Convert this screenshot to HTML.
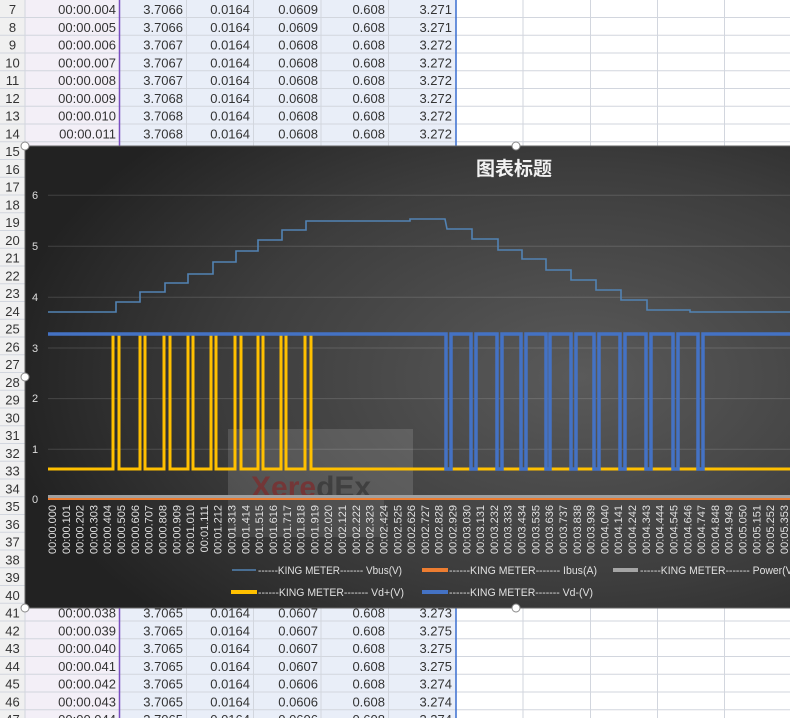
<!DOCTYPE html>
<html><head><meta charset="utf-8"><style>
html,body{margin:0;padding:0;background:#fff;}
svg{display:block;font-family:"Liberation Sans","Noto Sans CJK SC",sans-serif;}
</style></head><body>
<svg width="790" height="718" viewBox="0 0 790 718" xmlns="http://www.w3.org/2000/svg">
<defs>
<radialGradient id="bg" cx="0.72" cy="0.5" r="0.75">
<stop offset="0" stop-color="#5a5a5a"/><stop offset="0.6" stop-color="#3d3d3d"/><stop offset="1" stop-color="#222"/>
</radialGradient>
</defs>
<rect x="0" y="0" width="25" height="718" fill="#f0f0f0"/>
<rect x="25" y="0" width="94" height="718" fill="#f3eff7"/>
<rect x="120" y="0" width="336" height="718" fill="#e9eef8"/>
<g stroke="#d2d6de" stroke-width="1">
<line x1="0" y1="17.5" x2="790" y2="17.5"/><line x1="0" y1="35.3" x2="790" y2="35.3"/><line x1="0" y1="53" x2="790" y2="53"/><line x1="0" y1="70.8" x2="790" y2="70.8"/><line x1="0" y1="88.5" x2="790" y2="88.5"/><line x1="0" y1="106.3" x2="790" y2="106.3"/><line x1="0" y1="124" x2="790" y2="124"/><line x1="0" y1="141.8" x2="790" y2="141.8"/>
<line x1="0" y1="159.5" x2="25" y2="159.5"/><line x1="0" y1="177.3" x2="25" y2="177.3"/><line x1="0" y1="195" x2="25" y2="195"/><line x1="0" y1="212.8" x2="25" y2="212.8"/><line x1="0" y1="230.5" x2="25" y2="230.5"/><line x1="0" y1="248.3" x2="25" y2="248.3"/><line x1="0" y1="266" x2="25" y2="266"/><line x1="0" y1="283.8" x2="25" y2="283.8"/><line x1="0" y1="301.5" x2="25" y2="301.5"/><line x1="0" y1="319.3" x2="25" y2="319.3"/><line x1="0" y1="337" x2="25" y2="337"/><line x1="0" y1="354.8" x2="25" y2="354.8"/><line x1="0" y1="372.5" x2="25" y2="372.5"/><line x1="0" y1="390.3" x2="25" y2="390.3"/><line x1="0" y1="408" x2="25" y2="408"/><line x1="0" y1="425.8" x2="25" y2="425.8"/><line x1="0" y1="443.5" x2="25" y2="443.5"/><line x1="0" y1="461.3" x2="25" y2="461.3"/><line x1="0" y1="479" x2="25" y2="479"/><line x1="0" y1="496.8" x2="25" y2="496.8"/><line x1="0" y1="514.5" x2="25" y2="514.5"/><line x1="0" y1="532.3" x2="25" y2="532.3"/><line x1="0" y1="550" x2="25" y2="550"/><line x1="0" y1="567.8" x2="25" y2="567.8"/><line x1="0" y1="585.5" x2="25" y2="585.5"/><line x1="0" y1="603.3" x2="25" y2="603.3"/>
<line x1="0" y1="621" x2="790" y2="621"/><line x1="0" y1="638.8" x2="790" y2="638.8"/><line x1="0" y1="656.5" x2="790" y2="656.5"/><line x1="0" y1="674.3" x2="790" y2="674.3"/><line x1="0" y1="692" x2="790" y2="692"/><line x1="0" y1="709.8" x2="790" y2="709.8"/>
<line x1="25" y1="0" x2="25" y2="718"/><line x1="186.5" y1="0" x2="186.5" y2="718"/><line x1="253.5" y1="0" x2="253.5" y2="718"/><line x1="321" y1="0" x2="321" y2="718"/><line x1="388.5" y1="0" x2="388.5" y2="718"/>
<line x1="523" y1="0" x2="523" y2="718"/><line x1="590.5" y1="0" x2="590.5" y2="718"/><line x1="657.5" y1="0" x2="657.5" y2="718"/><line x1="724.5" y1="0" x2="724.5" y2="718"/>
</g>
<line x1="119.5" y1="0" x2="119.5" y2="718" stroke="#7a4fc0" stroke-width="1.5"/>
<line x1="456" y1="0" x2="456" y2="718" stroke="#3a6fd0" stroke-width="1.5"/>
<g font-size="13" fill="#333" text-anchor="middle">
<text x="12.5" y="14">7</text><text x="12.5" y="31.8">8</text><text x="12.5" y="49.5">9</text><text x="12.5" y="67.3">10</text><text x="12.5" y="85">11</text><text x="12.5" y="102.8">12</text><text x="12.5" y="120.5">13</text><text x="12.5" y="138.3">14</text><text x="12.5" y="156">15</text><text x="12.5" y="173.8">16</text><text x="12.5" y="191.5">17</text><text x="12.5" y="209.3">18</text><text x="12.5" y="227">19</text><text x="12.5" y="244.8">20</text><text x="12.5" y="262.5">21</text><text x="12.5" y="280.3">22</text><text x="12.5" y="298">23</text><text x="12.5" y="315.8">24</text><text x="12.5" y="333.5">25</text><text x="12.5" y="351.3">26</text><text x="12.5" y="369">27</text><text x="12.5" y="386.8">28</text><text x="12.5" y="404.5">29</text><text x="12.5" y="422.3">30</text><text x="12.5" y="440">31</text><text x="12.5" y="457.8">32</text><text x="12.5" y="475.5">33</text><text x="12.5" y="493.3">34</text><text x="12.5" y="511">35</text><text x="12.5" y="528.8">36</text><text x="12.5" y="546.5">37</text><text x="12.5" y="564.3">38</text><text x="12.5" y="582">39</text><text x="12.5" y="599.8">40</text><text x="12.5" y="617.5">41</text><text x="12.5" y="635.3">42</text><text x="12.5" y="653">43</text><text x="12.5" y="670.8">44</text><text x="12.5" y="688.5">45</text><text x="12.5" y="706.3">46</text><text x="12.5" y="724">47</text>
</g>
<g font-size="13" fill="#333" text-anchor="end">
<text x="116" y="14">00:00.004</text><text x="183" y="14">3.7066</text><text x="250" y="14">0.0164</text><text x="318" y="14">0.0609</text><text x="385" y="14">0.608</text><text x="452" y="14">3.271</text>
<text x="116" y="31.8">00:00.005</text><text x="183" y="31.8">3.7066</text><text x="250" y="31.8">0.0164</text><text x="318" y="31.8">0.0609</text><text x="385" y="31.8">0.608</text><text x="452" y="31.8">3.271</text>
<text x="116" y="49.5">00:00.006</text><text x="183" y="49.5">3.7067</text><text x="250" y="49.5">0.0164</text><text x="318" y="49.5">0.0608</text><text x="385" y="49.5">0.608</text><text x="452" y="49.5">3.272</text>
<text x="116" y="67.3">00:00.007</text><text x="183" y="67.3">3.7067</text><text x="250" y="67.3">0.0164</text><text x="318" y="67.3">0.0608</text><text x="385" y="67.3">0.608</text><text x="452" y="67.3">3.272</text>
<text x="116" y="85">00:00.008</text><text x="183" y="85">3.7067</text><text x="250" y="85">0.0164</text><text x="318" y="85">0.0608</text><text x="385" y="85">0.608</text><text x="452" y="85">3.272</text>
<text x="116" y="102.8">00:00.009</text><text x="183" y="102.8">3.7068</text><text x="250" y="102.8">0.0164</text><text x="318" y="102.8">0.0608</text><text x="385" y="102.8">0.608</text><text x="452" y="102.8">3.272</text>
<text x="116" y="120.5">00:00.010</text><text x="183" y="120.5">3.7068</text><text x="250" y="120.5">0.0164</text><text x="318" y="120.5">0.0608</text><text x="385" y="120.5">0.608</text><text x="452" y="120.5">3.272</text>
<text x="116" y="138.3">00:00.011</text><text x="183" y="138.3">3.7068</text><text x="250" y="138.3">0.0164</text><text x="318" y="138.3">0.0608</text><text x="385" y="138.3">0.608</text><text x="452" y="138.3">3.272</text>
<text x="116" y="617.5">00:00.038</text><text x="183" y="617.5">3.7065</text><text x="250" y="617.5">0.0164</text><text x="318" y="617.5">0.0607</text><text x="385" y="617.5">0.608</text><text x="452" y="617.5">3.273</text>
<text x="116" y="635.3">00:00.039</text><text x="183" y="635.3">3.7065</text><text x="250" y="635.3">0.0164</text><text x="318" y="635.3">0.0607</text><text x="385" y="635.3">0.608</text><text x="452" y="635.3">3.275</text>
<text x="116" y="653">00:00.040</text><text x="183" y="653">3.7065</text><text x="250" y="653">0.0164</text><text x="318" y="653">0.0607</text><text x="385" y="653">0.608</text><text x="452" y="653">3.275</text>
<text x="116" y="670.8">00:00.041</text><text x="183" y="670.8">3.7065</text><text x="250" y="670.8">0.0164</text><text x="318" y="670.8">0.0607</text><text x="385" y="670.8">0.608</text><text x="452" y="670.8">3.275</text>
<text x="116" y="688.5">00:00.042</text><text x="183" y="688.5">3.7065</text><text x="250" y="688.5">0.0164</text><text x="318" y="688.5">0.0606</text><text x="385" y="688.5">0.608</text><text x="452" y="688.5">3.274</text>
<text x="116" y="706.3">00:00.043</text><text x="183" y="706.3">3.7065</text><text x="250" y="706.3">0.0164</text><text x="318" y="706.3">0.0606</text><text x="385" y="706.3">0.608</text><text x="452" y="706.3">3.274</text>
<text x="116" y="724">00:00.044</text><text x="183" y="724">3.7065</text><text x="250" y="724">0.0164</text><text x="318" y="724">0.0606</text><text x="385" y="724">0.608</text><text x="452" y="724">3.274</text>
</g>

<rect x="25" y="146" width="770" height="462" fill="url(#bg)" stroke="#666" stroke-width="1"/>
<text x="514" y="175" font-size="19" font-weight="bold" fill="#f2f2f2" text-anchor="middle">图表标题</text>
<g stroke="#ffffff" stroke-opacity="0.14" stroke-width="1">
<line x1="48" y1="195.3" x2="790" y2="195.3"/><line x1="48" y1="246.3" x2="790" y2="246.3"/><line x1="48" y1="297.3" x2="790" y2="297.3"/><line x1="48" y1="348" x2="790" y2="348"/><line x1="48" y1="398.6" x2="790" y2="398.6"/><line x1="48" y1="449.3" x2="790" y2="449.3"/>
</g>
<g font-size="11" fill="#ddd" text-anchor="middle">
<text x="35" y="199">6</text><text x="35" y="250">5</text><text x="35" y="301">4</text><text x="35" y="352">3</text><text x="35" y="402">2</text><text x="35" y="453">1</text><text x="35" y="503">0</text>
</g>
<rect x="228" y="429" width="185" height="71" fill="#ffffff" fill-opacity="0.13"/>
<rect x="228" y="500" width="156" height="37" fill="#ffffff" fill-opacity="0.09"/>
<text x="251" y="497" font-size="30" font-weight="bold" fill="#7a2e30" fill-opacity="0.8">Xere<tspan fill="#3a3a3a">dEx</tspan></text>

<path d="M48,312 H116 V302 H140 V292 H165 V283 H188 V274 H213 V262 H236 V251 H258 V240 H282 V230 H306 V221 H410 V219 H445 L447,229 H472 V239 H498 V250 H522 V259 H546 V270 H571 V280 H596 V290 H621 V300 H647 V310 H690 V312 H790" fill="none" stroke="#5283b4" stroke-width="1.6"/>
<line x1="48" y1="496.5" x2="790" y2="496.5" stroke="#a0a0a0" stroke-width="3"/>
<line x1="48" y1="499" x2="790" y2="499" stroke="#ed7d31" stroke-width="2"/>
<path d="M48,469 H113 V334 H119 V469 H140 V334 H145 V469 H164 V334 H170 V469 H188 V334 H193 V469 H211 V334 H216 V469 H235 V334 H241 V469 H258 V334 H263 V469 H281 V334 H286 V469 H305 V334 H311 V469 H790" fill="none" stroke="#ffc000" stroke-width="3"/>
<path d="M48,334 H446 V469 H451 V334 H471 V469 H476 V334 H497 V469 H502 V334 H521 V469 H526 V334 H546 V469 H550 V334 H571 V469 H576 V334 H594 V469 H599 V334 H620 V469 H625 V334 H646 V469 H651 V334 H673 V469 H678 V334 H698 V469 H703 V334 H790" fill="none" stroke="#4472c4" stroke-width="3.5"/>

<g font-size="11" fill="#e0e0e0" text-anchor="end">
<text transform="translate(56,505) rotate(-90)">00:00.000</text><text transform="translate(69.8,505) rotate(-90)">00:00.101</text><text transform="translate(83.6,505) rotate(-90)">00:00.202</text><text transform="translate(97.4,505) rotate(-90)">00:00.303</text><text transform="translate(111.2,505) rotate(-90)">00:00.404</text><text transform="translate(125.1,505) rotate(-90)">00:00.505</text><text transform="translate(138.9,505) rotate(-90)">00:00.606</text><text transform="translate(152.7,505) rotate(-90)">00:00.707</text><text transform="translate(166.5,505) rotate(-90)">00:00.808</text><text transform="translate(180.3,505) rotate(-90)">00:00.909</text>
<text transform="translate(194.1,505) rotate(-90)">00:01.010</text><text transform="translate(207.9,505) rotate(-90)">00:01.111</text><text transform="translate(221.7,505) rotate(-90)">00:01.212</text><text transform="translate(235.5,505) rotate(-90)">00:01.313</text><text transform="translate(249.3,505) rotate(-90)">00:01.414</text><text transform="translate(263.2,505) rotate(-90)">00:01.515</text><text transform="translate(277,505) rotate(-90)">00:01.616</text><text transform="translate(290.8,505) rotate(-90)">00:01.717</text><text transform="translate(304.6,505) rotate(-90)">00:01.818</text><text transform="translate(318.4,505) rotate(-90)">00:01.919</text>
<text transform="translate(332.2,505) rotate(-90)">00:02.020</text><text transform="translate(346,505) rotate(-90)">00:02.121</text><text transform="translate(359.8,505) rotate(-90)">00:02.222</text><text transform="translate(373.6,505) rotate(-90)">00:02.323</text><text transform="translate(387.4,505) rotate(-90)">00:02.424</text><text transform="translate(401.3,505) rotate(-90)">00:02.525</text><text transform="translate(415.1,505) rotate(-90)">00:02.626</text><text transform="translate(428.9,505) rotate(-90)">00:02.727</text><text transform="translate(442.7,505) rotate(-90)">00:02.828</text><text transform="translate(456.5,505) rotate(-90)">00:02.929</text>
<text transform="translate(470.3,505) rotate(-90)">00:03.030</text><text transform="translate(484.1,505) rotate(-90)">00:03.131</text><text transform="translate(497.9,505) rotate(-90)">00:03.232</text><text transform="translate(511.7,505) rotate(-90)">00:03.333</text><text transform="translate(525.5,505) rotate(-90)">00:03.434</text><text transform="translate(539.4,505) rotate(-90)">00:03.535</text><text transform="translate(553.2,505) rotate(-90)">00:03.636</text><text transform="translate(567,505) rotate(-90)">00:03.737</text><text transform="translate(580.8,505) rotate(-90)">00:03.838</text><text transform="translate(594.6,505) rotate(-90)">00:03.939</text>
<text transform="translate(608.4,505) rotate(-90)">00:04.040</text><text transform="translate(622.2,505) rotate(-90)">00:04.141</text><text transform="translate(636,505) rotate(-90)">00:04.242</text><text transform="translate(649.8,505) rotate(-90)">00:04.343</text><text transform="translate(663.6,505) rotate(-90)">00:04.444</text><text transform="translate(677.5,505) rotate(-90)">00:04.545</text><text transform="translate(691.3,505) rotate(-90)">00:04.646</text><text transform="translate(705.1,505) rotate(-90)">00:04.747</text><text transform="translate(718.9,505) rotate(-90)">00:04.848</text><text transform="translate(732.7,505) rotate(-90)">00:04.949</text>
<text transform="translate(746.5,505) rotate(-90)">00:05.050</text><text transform="translate(760.3,505) rotate(-90)">00:05.151</text><text transform="translate(774.1,505) rotate(-90)">00:05.252</text><text transform="translate(787.9,505) rotate(-90)">00:05.353</text>
</g>

<line x1="232" y1="570" x2="256" y2="570" stroke="#5283b4" stroke-width="1.5"/>
<line x1="422" y1="570" x2="448" y2="570" stroke="#ed7d31" stroke-width="4"/>
<line x1="613" y1="570" x2="638" y2="570" stroke="#a5a5a5" stroke-width="4"/>
<line x1="231" y1="592" x2="257" y2="592" stroke="#ffc000" stroke-width="4"/>
<line x1="422" y1="592" x2="448" y2="592" stroke="#4472c4" stroke-width="4"/>
<g font-size="11" fill="#e0e0e0">
<text x="258" y="574" textLength="144" lengthAdjust="spacingAndGlyphs">------KING METER------- Vbus(V)</text>
<text x="449" y="574" textLength="148" lengthAdjust="spacingAndGlyphs">------KING METER------- Ibus(A)</text>
<text x="640" y="574" textLength="156" lengthAdjust="spacingAndGlyphs">------KING METER------- Power(V)</text>
<text x="258" y="596" textLength="146" lengthAdjust="spacingAndGlyphs">------KING METER------- Vd+(V)</text>
<text x="449" y="596" textLength="144" lengthAdjust="spacingAndGlyphs">------KING METER------- Vd-(V)</text>
</g>
<g fill="#fff" stroke="#888" stroke-width="1">
<circle cx="25" cy="146" r="4"/><circle cx="516" cy="146" r="4"/><circle cx="25" cy="377" r="4"/><circle cx="25" cy="608" r="4"/><circle cx="516" cy="608" r="4"/>
</g>
</svg>
</body></html>
